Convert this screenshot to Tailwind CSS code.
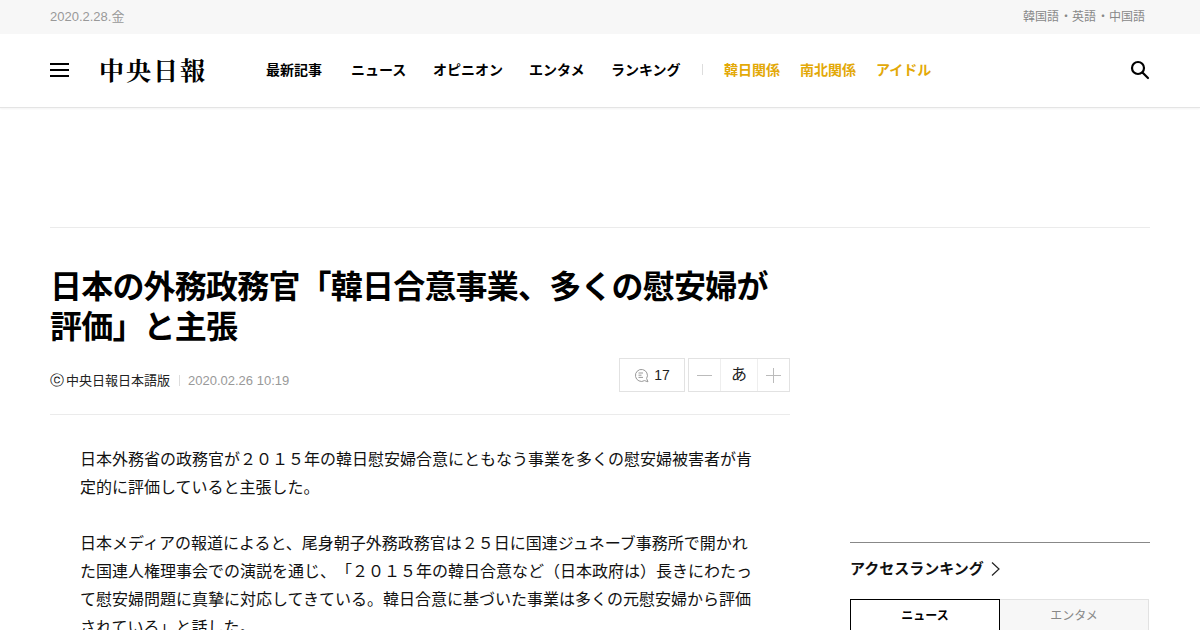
<!DOCTYPE html>
<html lang="ja">
<head>
    <meta charset="UTF-8">
    <title>中央日報</title>
    <script src="https://cdn.jsdelivr.net/npm/@tailwindcss/browser@4"></script>
</head>
<body class="bg-white font-['Liberation_Sans','Noto_Sans_CJK_JP',sans-serif] [text-spacing-trim:space-all] h-[630px] overflow-hidden">
    <div class="h-[34px] bg-[#f7f7f7]">
        <div class="w-[1100px] mx-auto flex justify-between items-center h-full text-xs text-[#999]">
            <span class="text-[13px]">2020.2.28.金</span>
            <span class="pr-[5px] text-[#888]">韓国語<span class="pl-px">・</span>英語<span class="pl-px">・</span>中国語</span>
        </div>
    </div>

    <header class="h-[74px] bg-white border-b border-[#e4e4e4] shadow-[0_1px_2px_rgba(0,0,0,0.05)]">
        <div class="w-[1100px] mx-auto h-full flex items-center pb-[2px]">
            <div class="w-[19px] h-[14px] flex flex-col justify-between">
                <div class="h-[2px] bg-black"></div>
                <div class="h-[2px] bg-black"></div>
                <div class="h-[2px] bg-black"></div>
            </div>
            <div class="ml-[30px] w-[167px] text-[25px] leading-none tracking-[2px] font-bold text-black font-['Noto_Serif_CJK_JP','Liberation_Serif','Noto_Sans_CJK_JP',serif]">中央日報</div>
            <nav class="flex items-center text-sm font-bold text-black">
                <a class="w-[85px]">最新記事</a>
                <a class="w-[82px]">ニュース</a>
                <a class="w-[96px]">オピニオン</a>
                <a class="w-[82px]">エンタメ</a>
                <a class="w-[91px]">ランキング</a>
                <span class="w-px h-[11px] bg-[#ddd] mr-[21px]"></span>
                <a class="w-[76px] text-[#e3a908]">韓日関係</a>
                <a class="w-[76px] text-[#e3a908]">南北関係</a>
                <a class="text-[#e3a908]">アイドル</a>
            </nav>
            <svg class="ml-auto" width="20" height="20" viewBox="0 0 20 20" fill="none" stroke="black" stroke-width="2.2">
                <circle cx="8" cy="8" r="6"></circle>
                <path d="M12.5 12.5L18 18" stroke-linecap="round"></path>
            </svg>
        </div>
    </header>

    <div class="w-[1100px] mx-auto h-[120px] border-b border-[#ebebeb]"></div>

    <main class="w-[1100px] mx-auto flex justify-between">
        <article class="w-[740px]">
            <h1 class="mt-[39px] text-[32px] leading-[40px] tracking-[-0.8px] font-bold text-black">日本の外務政務官「韓日合意事業、多くの慰安婦が評価」と主張</h1>
            <div class="mt-[11px] h-[57px] border-b border-[#ebebeb] flex justify-between">
                <div class="flex items-center h-[44px] pt-[1px] text-[13px]">
                    <span class="w-[16px] text-[14px] text-[#111] font-['DejaVu_Sans']">ⓒ</span>
                    <span class="text-[#222]">中央日報日本語版</span>
                    <span class="w-px h-[11px] bg-[#ddd] ml-[9px] mr-[8px]"></span>
                    <span class="text-[#999]">2020.02.26 10:19</span>
                </div>
                <div class="flex h-[34px] gap-[3px] text-sm text-[#222]">
                    <div class="w-[66px] border border-[#e2e2e2] flex items-center justify-center gap-[5px]">
                        <svg width="15" height="15" viewBox="0 0 15 15" fill="none" stroke="#999" stroke-width="1">
                            <path d="M10.5 12.6A6 6 0 1 1 12.6 10.5L14 13.8Z"></path>
                            <path d="M4.5 5H9M4.5 7.2H7.5M4.5 9.4H9"></path>
                        </svg>
                        <span>17</span>
                    </div>
                    <div class="flex border border-[#e2e2e2]">
                        <div class="w-[32px] flex items-center justify-center border-r border-[#eee]">
                            <svg width="15" height="15" viewBox="0 0 15 15" stroke="#bbb"><path d="M0 7.5H15"></path></svg>
                        </div>
                        <div class="w-[37px] flex items-center justify-center border-r border-[#eee] text-base">あ</div>
                        <div class="w-[31px] flex items-center justify-center">
                            <svg width="15" height="15" viewBox="0 0 15 15" stroke="#bbb"><path d="M0 7.5H15M7.5 0V15"></path></svg>
                        </div>
                    </div>
                </div>
            </div>
            <div class="mt-[31px] px-[30px] text-base leading-[28px] text-[#111]">
                <p>日本外務省の政務官が２０１５年の韓日慰安婦合意にともなう事業を多くの慰安婦被害者が肯定的に評価していると主張した。</p>
                <p class="mt-[28px]">日本メディアの報道によると、尾身朝子外務政務官は２５日に国連ジュネーブ事務所で開かれた国連人権理事会での演説を通じ、「２０１５年の韓日合意など（日本政府は）長きにわたって慰安婦問題に真摯に対応してきている。韓日合意に基づいた事業は多くの元慰安婦から評価されている」と話した。</p>
            </div>
        </article>
        <aside class="w-[300px] pt-[314px]">
            <div class="border-t border-[#888] pt-[15px]">
                <div class="flex items-center gap-[7px] text-[15px] font-bold text-[#111] leading-[22px]">
                    アクセスランキング
                    <svg width="9" height="16" viewBox="0 0 9 16" fill="none" stroke="#222" stroke-width="1.2"><path d="M1 1.5L8 8L1 14.5"></path></svg>
                </div>
                <div class="mt-[19px] flex w-[299px] text-xs h-[40px]">
                    <div class="w-[150px] border border-black border-b-0 font-bold text-center pt-[8px] text-black">ニュース</div>
                    <div class="w-[149px] border border-[#e2e2e2] border-l-0 bg-[#f7f7f7] text-center pt-[8px] text-[#888]">エンタメ</div>
                </div>
            </div>
        </aside>
    </main>
</body>
</html>
